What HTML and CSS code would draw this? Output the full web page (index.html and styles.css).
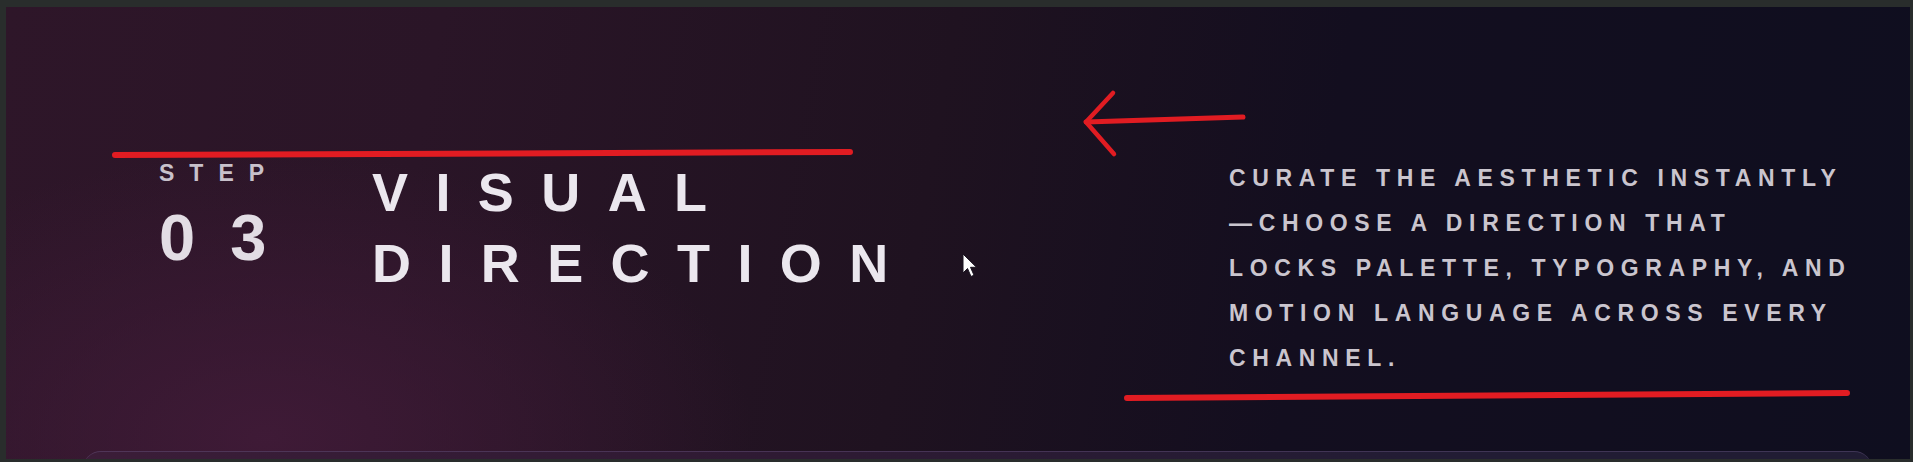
FILE: index.html
```html
<!DOCTYPE html>
<html lang="en">
<head>
<meta charset="utf-8">
<title>Step 03 — Visual Direction</title>
<link rel="stylesheet" href="styles.css">
</head>
<body>
<div class="frame">
  <main class="panel">
    <section class="step">
      <div class="meta">
        <div class="meta-label">STEP</div>
        <div class="meta-num">03</div>
      </div>
      <h2 class="title">VISUAL<br>DIRECTION</h2>
      <p class="desc">CURATE THE AESTHETIC INSTANTLY<br>—CHOOSE A DIRECTION THAT<br>LOCKS PALETTE, TYPOGRAPHY, AND<br>MOTION LANGUAGE ACROSS EVERY<br>CHANNEL.</p>
    </section>
    <div class="next-card"></div>
  </main>
  <svg class="marks" width="1913" height="462" viewBox="0 0 1913 462" aria-hidden="true">
    <g fill="none" stroke="#e11c22" stroke-linecap="round" stroke-linejoin="round">
      <path d="M115 155 L850 152" stroke-width="6"/>
      <path d="M1243 117 L1086 122" stroke-width="5"/>
      <path d="M1113 93 L1086 122 L1114 154" stroke-width="4.5"/>
      <path d="M1127 398 L1847 393" stroke-width="6"/>
    </g>
    <path class="cursor" d="M963 254 L963 273 L967.5 268.5 L971 276.5 L974 275.2 L970.5 267.3 L976.5 267.3 Z" fill="#ffffff" stroke="#1a1420" stroke-width="1"/>
  </svg>
</div>
</body>
</html>
```
FILE: styles.css
```css
* { box-sizing: border-box; }

html, body {
  margin: 0;
  padding: 0;
  background: #292d2c;
}

.frame {
  position: relative;
  width: 1913px;
  height: 462px;
  padding: 7px 3px 3px 6px;
  font-family: "Liberation Sans", Arial, sans-serif;
  font-weight: 700;
}

.panel {
  height: 452px;
  overflow: hidden;
  display: flex;
  flex-direction: column;
  background:
    radial-gradient(650px 380px at 260px 430px, rgba(66, 27, 57, 0.85) 0%, rgba(66, 27, 57, 0) 75%),
    linear-gradient(100deg, #2e1629 0%, #2a1527 22%, #1f1220 48%, #130e1f 68%, #0f0e1f 100%);
}

.step {
  height: 444px;
  flex: 0 0 444px;
  display: grid;
  grid-template-columns: 213px 857px 1fr;
  align-items: start;
  padding: 149px 0 0 153px;
}

.meta {
  margin-top: 6px;
  display: flex;
  flex-direction: column;
}

.meta-label {
  font-size: 23px;
  line-height: 23px;
  letter-spacing: 15px;
  color: #c8c1cb;
}

.meta-num {
  margin-top: 21px;
  font-size: 65px;
  line-height: 64px;
  letter-spacing: 35px;
  color: #e2dde4;
}

.title {
  margin: 1px 0 0;
  font-size: 54px;
  line-height: 71px;
  font-weight: 700;
  letter-spacing: 27.4px;
  color: #ebe7ee;
  white-space: nowrap;
}

.desc {
  margin: 0;
  font-size: 23px;
  line-height: 45px;
  letter-spacing: 6.65px;
  color: #cac5ce;
  white-space: nowrap;
}

.next-card {
  flex: 0 0 24px;
  margin: 0 38px 0 77px;
  border-radius: 18px 18px 0 0;
  border-top: 1px solid rgba(120, 100, 150, 0.35);
  background: linear-gradient(90deg, #3b1d38 0%, #2e1a33 40%, #221c34 75%, #201c33 100%);
}

.marks {
  position: absolute;
  top: 0;
  left: 0;
  pointer-events: none;
}
```
